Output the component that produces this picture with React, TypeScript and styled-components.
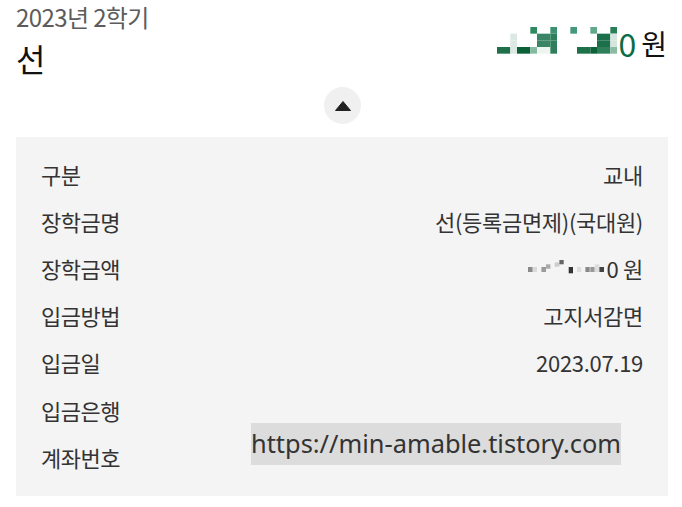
import styled, { createGlobalStyle } from "styled-components";

const GlobalStyle = createGlobalStyle`
  html, body {
    margin: 0;
    padding: 0;
    background: #ffffff;
  }
  body {
    font-family: "Noto Sans CJK KR", "Noto Sans", sans-serif;
    color: #222;
  }
`;

const Page = styled.div`
  width: 682px;
  height: 507px;
  padding: 0 14px 0 16px;
  box-sizing: border-box;
  display: flex;
  flex-direction: column;
`;

const Header = styled.div`
  display: flex;
  justify-content: space-between;
  align-items: flex-start;
`;

const Term = styled.div`
  margin-top: 2px;
  font-size: 24px;
  line-height: 30px;
  color: #5c5c5c;
  letter-spacing: -0.6px;
`;

const Name = styled.div`
  margin-top: 6px;
  font-size: 32px;
  line-height: 40px;
  color: #111;
`;

const Amount = styled.div`
  margin-top: 27px;
  margin-right: 1px;
  display: flex;
  align-items: flex-end;
  font-size: 28px;
  line-height: 30px;
  color: #111;

  .num {
    color: #0b6b44;
    font-size: 32px;
    margin-right: 5px;
  }
`;

const Toggle = styled.button`
  align-self: center;
  margin: 9px 0 13px 1px;
  width: 37px;
  height: 37px;
  border-radius: 50%;
  border: none;
  padding: 0;
  background: #f0f0f0;
  display: flex;
  align-items: center;
  justify-content: center;
`;

const Panel = styled.div`
  position: relative;
  background: #f4f4f4;
  padding: 13px 25px 16px 25px;
  display: flex;
  flex-direction: column;
`;

const Row = styled.div`
  height: 47.2px;
  display: flex;
  align-items: center;
  justify-content: space-between;
  font-size: 22px;
  color: #333;
`;

const Label = styled.span`
  letter-spacing: -0.5px;
`;

const Value = styled.span`
  display: flex;
  align-items: center;
  letter-spacing: -0.3px;
`;

const Watermark = styled.div`
  position: absolute;
  left: 235px;
  top: 286px;
  width: 370px;
  height: 42px;
  box-sizing: border-box;
  background: #dcdcdc;
  color: #333;
  font-family: "Noto Sans", sans-serif;
  font-size: 25.4px;
  line-height: 40px;
  white-space: nowrap;
`;

const greenCells: [number, number, number, string][] = [
  // col, row, width(cols), colour
  [5, 0, 1, "#2e8a5f"],
  [8, 0, 1, "#3c9170"],
  [11, 0, 1, "#46987a"],
  [14, 0, 1, "#62a88a"],
  [17, 0, 1, "#2a7f57"],
  [2, 1, 1, "#dce9e3"],
  [2, 2, 1, "#dce9e3"],
  [6, 1, 2, "#3b8567"],
  [6, 2, 2, "#3b8567"],
  [8, 1, 1, "#2d7f5c"],
  [8, 2, 1, "#2d7f5c"],
  [15, 1, 2, "#1c6f4b"],
  [15, 2, 2, "#1c6f4b"],
  [17, 1, 1, "#d6e6de"],
  [17, 2, 1, "#d6e6de"],
  [0, 3, 2, "#1f7049"],
  [2, 3, 1, "#dce8e2"],
  [3, 3, 2, "#0c6037"],
  [5, 3, 1, "#86b9a1"],
  [6, 3, 2, "#eef5f1"],
  [8, 3, 1, "#2f7e5a"],
  [12, 3, 2, "#1d7149"],
  [14, 3, 1, "#0d6238"],
  [15, 3, 2, "#2f7f5b"],
  [17, 3, 1, "#8cbba5"],
];

const GreenMosaic = () => {
  const s = 20 / 3;
  return (
    <svg width={121} height={27} viewBox="0 0 121 27" style={{ marginBottom: 4 }}>
      {greenCells.map(([c, r, w, fill], i) => (
        <rect key={i} x={c * s} y={r * s} width={w * s} height={s} fill={fill} />
      ))}
    </svg>
  );
};

const grayCells: [number, number, number, number, string][] = [
  [0, 7, 4.7, 5, "#8a8a8a"],
  [4.7, 7, 4.3, 5, "#dadada"],
  [13.4, 7, 4.6, 5, "#9a9a9a"],
  [18, 4.3, 4.4, 4.4, "#aaaaaa"],
  [26.7, 2.4, 4.7, 4.3, "#cccccc"],
  [31.4, 0, 4.3, 4.3, "#666666"],
  [40.7, 7, 4.3, 6.3, "#333333"],
  [49, 7, 4.3, 5, "#dddddd"],
  [57.4, 7, 4.3, 5, "#888888"],
  [62.3, 7, 4.4, 5, "#999999"],
  [66.7, 4.3, 4.7, 7.7, "#dddddd"],
  [71.4, 7, 4.6, 5, "#444444"],
];

const GrayMosaic = () => (
  <svg width={78} height={14} viewBox="0 0 78 14" style={{ marginRight: 1, marginTop: -2 }}>
    {grayCells.map(([x, y, w, h, fill], i) => (
      <rect key={i} x={x} y={y} width={w} height={h} fill={fill} />
    ))}
  </svg>
);

const rows: { label: string; value: React.ReactNode }[] = [
  { label: "구분", value: "교내" },
  { label: "장학금명", value: "선(등록금면제)(국대원)" },
  {
    label: "장학금액",
    value: (
      <>
        <GrayMosaic />
        0&nbsp;원
      </>
    ),
  },
  { label: "입금방법", value: "고지서감면" },
  { label: "입금일", value: "2023.07.19" },
  { label: "입금은행", value: "" },
  { label: "계좌번호", value: "" },
];

export default function App() {
  return (
    <>
      <GlobalStyle />
      <Page>
        <Header>
          <div>
            <Term>2023년 2학기</Term>
            <Name>선</Name>
          </div>
          <Amount>
            <GreenMosaic />
            <span className="num">0</span>
            <span>원</span>
          </Amount>
        </Header>
        <Toggle aria-label="접기">
          <svg width="16" height="10" viewBox="0 0 16 10">
            <path d="M8 0.5 L15.5 9.5 L0.5 9.5 Z" fill="#222" strokeLinejoin="round" stroke="#222" strokeWidth="1" />
          </svg>
        </Toggle>
        <Panel>
          {rows.map((r) => (
            <Row key={r.label}>
              <Label>{r.label}</Label>
              <Value>{r.value}</Value>
            </Row>
          ))}
          <Watermark>https://min-amable.tistory.com</Watermark>
        </Panel>
      </Page>
    </>
  );
}
